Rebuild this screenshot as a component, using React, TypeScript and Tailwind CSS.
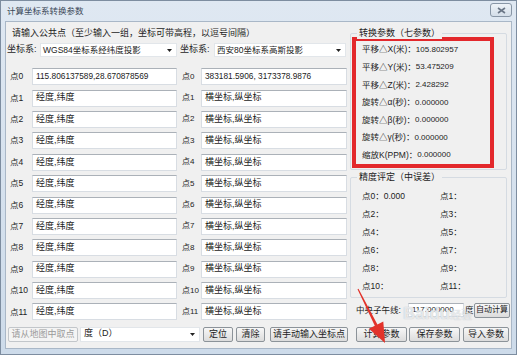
import React from "react";

const leftPts = ["115.806137589,28.670878569", ...Array(11).fill("经度,纬度")];
const rightPts = ["383181.5906, 3173378.9876", ...Array(11).fill("横坐标,纵坐标")];

const params = [
  ["平移△X(米)", "105.802957"],
  ["平移△Y(米)", "53.475209"],
  ["平移△Z(米)", "2.428292"],
  ["旋转△α(秒)", "0.000000"],
  ["旋转△β(秒)", "0.000000"],
  ["旋转△γ(秒)", "0.000000"],
  ["缩放K(PPM)", "0.000000"],
];

const accuracy = [
  ["点0：0.000", "点1："],
  ["点2：", "点3："],
  ["点4：", "点5："],
  ["点6：", "点7："],
  ["点8：", "点9："],
  ["点10：", "点11："],
];

function TextBox({ value, num, className = "" }: { value: string; num?: boolean; className?: string }) {
  return (
    <div
      className={`h-[17px] bg-white border border-[#d8dde3] border-t-[#abb1b8] pl-[3px] flex items-center overflow-hidden whitespace-nowrap text-[#222] ${num ? "text-[8.3px]" : "text-[9px]"} ${className}`}
    >
      {value}
    </div>
  );
}

function Btn({ children, className = "", disabled }: { children: React.ReactNode; className?: string; disabled?: boolean }) {
  return (
    <button
      className={`h-[15px] shrink-0 border rounded-[2px] bg-linear-to-b flex items-center justify-center whitespace-nowrap leading-none ${
        disabled
          ? "border-[#c2c6ca] from-[#f4f4f4] to-[#f4f4f4] text-[#9a9a9a]"
          : "border-[#8c9399] from-[#f7f7f7] to-[#dcdcdc] text-[#222]"
      } ${className}`}
    >
      {children}
    </button>
  );
}

function Caret() {
  return (
    <svg width="5" height="3" viewBox="0 0 5 3" className="shrink-0">
      <path d="M0 0h5L2.5 3z" fill="#222" />
    </svg>
  );
}

function Select({ value, className = "" }: { value: string; className?: string }) {
  return (
    <div
      className={`h-[14px] bg-white border border-[#e2e6ea] flex items-center justify-between pl-[2px] pr-[4px] whitespace-nowrap text-[8.5px] text-[#222] ${className}`}
    >
      <span>{value}</span>
      <Caret />
    </div>
  );
}

export default function App() {
  return (
    <div className="relative w-[517px] h-[355px] overflow-hidden border border-[#7d8da0] bg-linear-to-b from-[#dfe8f2] to-[#cddbea] font-['Liberation_Sans','Noto_Sans_CJK_SC',sans-serif]">
      {/* Title bar */}
      <div className="relative h-[20px] flex items-center pl-[6px] text-[8.5px] text-[#3a4757]">
        计算坐标系转换参数
        <div className="absolute right-[4px] top-[2px] w-[22px] h-[14px] rounded-[3px] border border-[#8896a6] bg-linear-to-b from-[#eef3f8] to-[#d4dee9] flex items-center justify-center">
          <svg width="9" height="7" viewBox="0 0 9 7">
            <path d="M1 1l7 5M8 1L1 6" stroke="#6b7787" strokeWidth="1.6" fill="none" />
          </svg>
        </div>
      </div>

      {/* Client area */}
      <div className="mx-[4px] h-[328px] border border-[#a9b7c7] bg-[#f0f0f0] flex text-[#1c1c1c]">
        {/* Left side: common points */}
        <div className="w-[344px] shrink-0 flex flex-col">
          <div className="mt-[5px] h-[12px] leading-[12px] pl-[6px] text-[9px] whitespace-nowrap">
            请输入公共点（至少输入一组，坐标可带高程，以逗号间隔）
          </div>
          <div className="mt-[4px] h-[14px] pl-[1px] flex items-center text-[9px] whitespace-nowrap">
            <span className="w-[33px] shrink-0">坐标系:</span>
            <Select value="WGS84坐标系经纬度投影" className="w-[137px]" />
            <span className="ml-[3px] w-[34px] shrink-0">坐标系:</span>
            <Select value="西安80坐标系高斯投影" className="w-[132px]" />
          </div>

          <div className="mt-[9px] flex flex-col pl-[4px]">
            {leftPts.map((lv, i) => (
              <div key={i} className="h-[21.4px] flex items-center">
                <span className="w-[22px] shrink-0 text-[8.5px] whitespace-nowrap">点{i}</span>
                <TextBox value={lv} num={i === 0} className="w-[145px]" />
                <span className="ml-[5px] w-[19px] shrink-0 text-[8px] whitespace-nowrap">点{i}</span>
                <TextBox value={rightPts[i]} num={i === 0} className="w-[146px]" />
              </div>
            ))}
          </div>

          <div className="mt-[4px] h-[15px] flex items-center text-[9px]">
            <Btn disabled className="ml-[2px] w-[70px]">请从地图中取点</Btn>
            <div className="ml-[2px] w-[120px] h-[15px] bg-white border border-[#e2e6ea] flex items-center justify-between pl-[3px] pr-[4px] whitespace-nowrap">
              <span>度（D）</span>
              <Caret />
            </div>
            <Btn className="ml-[3px] w-[30px]">定位</Btn>
            <Btn className="ml-[3px] w-[29px]">清除</Btn>
            <Btn className="ml-[5px] w-[78px]">请手动输入坐标点</Btn>
          </div>
        </div>

        {/* Right side: parameters */}
        <div className="w-[161px] shrink-0 flex flex-col">
          <div className="relative mt-[11px] w-[157px] h-[137px] border border-[#d5dbe2] rounded-[2px]">
            <span className="absolute -top-[7px] left-[6px] px-[2px] bg-[#f0f0f0] text-[9px] leading-[12px] whitespace-nowrap">
              转换参数（七参数）
            </span>
            <div className="ml-[1px] mt-[3px] w-[142px] h-[131px] border-[4px] border-[#e3282c] flex flex-col pl-[6px]">
              {params.map(([k, v]) => (
                <div key={k} className="h-[17.6px] flex items-center whitespace-nowrap text-[8.5px]">
                  <span>{k}：</span>
                  <span className="text-[8px]">{v}</span>
                </div>
              ))}
            </div>
          </div>

          <div className="relative mt-[7px] w-[157px] h-[121px] border border-[#d5dbe2] rounded-[2px] pt-[9px] pl-[11px]">
            <span className="absolute -top-[7px] left-[6px] px-[2px] bg-[#f0f0f0] text-[9px] leading-[12px] whitespace-nowrap">
              精度评定（中误差）
            </span>
            {accuracy.map(([a, b]) => (
              <div key={a} className="h-[18px] flex items-center text-[8.5px] whitespace-nowrap">
                <span className="w-[78px]">{a}</span>
                <span>{b}</span>
              </div>
            ))}
          </div>

          <div className="mt-[5px] h-[14px] flex items-center pl-[6px] text-[8.5px] whitespace-nowrap">
            <span className="w-[52px] shrink-0">中央子午线:</span>
            <div className="w-[56px] shrink-0 h-[14px] bg-white border border-[#d8dde3] border-t-[#abb1b8] pl-[3px] flex items-center text-[8px]">
              117.000000
            </div>
            <span className="ml-[1px] w-[9px] shrink-0">度</span>
            <Btn className="w-[36px] text-[8px]">自动计算</Btn>
          </div>

          <div className="mt-[10px] h-[15px] flex items-center pl-[6px] text-[9px]">
            <Btn className="w-[51px]">计算参数</Btn>
            <Btn className="ml-[2px] w-[51px]">保存参数</Btn>
            <Btn className="ml-[3px] w-[46px]">导入参数</Btn>
          </div>
        </div>
      </div>

      {/* Watermark */}
      <span className="absolute left-[402px] top-[300px] text-[17px] font-bold text-white/70 [text-shadow:0_0_1px_#a8b0b8] whitespace-nowrap pointer-events-none">
        Baidu<span className="text-[11px] font-normal">经验</span>
      </span>

      {/* Annotation arrow */}
      <svg className="absolute left-[345px] top-[280px] pointer-events-none" width="55" height="70" viewBox="0 0 55 70">
        <polygon points="11.5,8.3 28.8,44.8 22.9,47.7 39,62 37.3,40.5 31.4,43.4 12.5,7.7" fill="#e2332b" />
      </svg>
    </div>
  );
}
